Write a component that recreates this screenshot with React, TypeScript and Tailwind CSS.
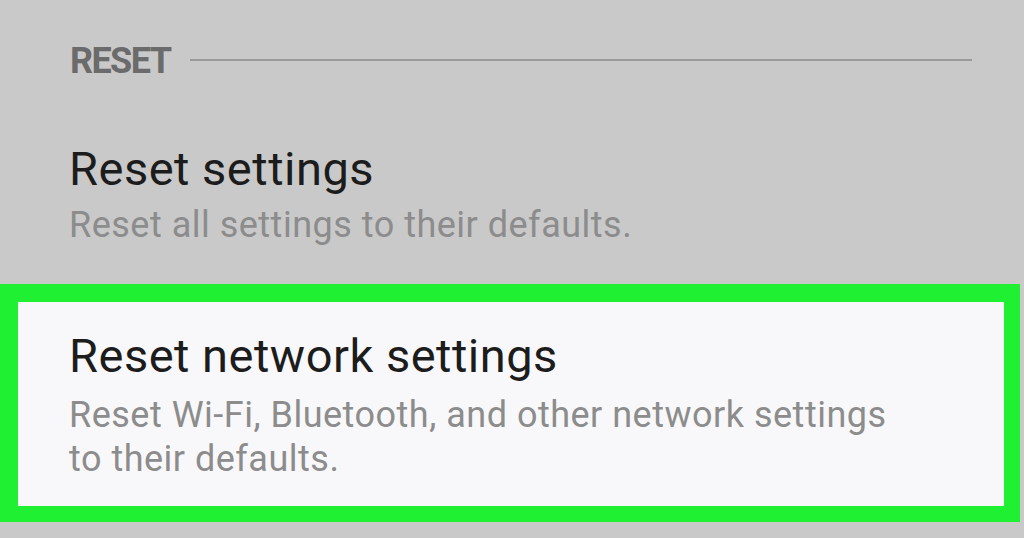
export default function App() {
  return (
    <div className="w-[1024px] h-[538px] bg-[#c9c9c9] overflow-hidden" style={{ fontFamily: "Roboto, 'Noto Sans', sans-serif" }}>
      <div className="flex items-center pl-[70px] pr-[52px] pt-[40px]">
        <span className="text-[36px] font-bold text-[#6b6b6b] leading-[42px] tracking-[-1.6px]">RESET</span>
        <div className="flex-1 h-[2px] bg-[#9a9a9a] ml-[20px] mt-[-2px]" />
      </div>
      <div className="pl-[69px] mt-[60px]">
        <div className="text-[47px] text-[#1c1c1c] leading-[54px] tracking-[0.5px]">Reset settings</div>
        <div className="text-[36px] text-[#8c8c8c] leading-[44px] tracking-[0.5px] mt-[7px]">Reset all settings to their defaults.</div>
      </div>
      <div className="w-[1020px] mt-[37px] border-t-[18px] border-b-[16px] border-l-[18px] border-r-[16px] border-[#20f032] bg-[#f8f8fa] h-[238px] pl-[51px] pt-[27px]">
        <div className="text-[47px] text-[#1c1c1c] leading-[54px] tracking-[0.5px]">Reset network settings</div>
        <div className="text-[36px] text-[#8c8c8c] leading-[44px] tracking-[0.5px] mt-[10px] w-[840px]">Reset Wi-Fi, Bluetooth, and other network settings to their defaults.</div>
      </div>
    </div>
  );
}
